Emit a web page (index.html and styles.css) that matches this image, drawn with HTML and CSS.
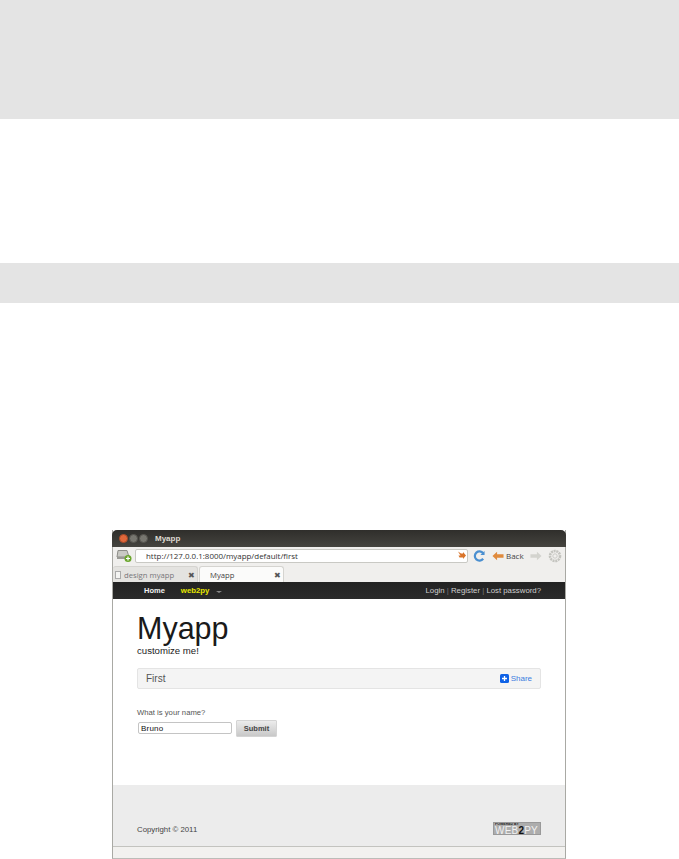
FILE: index.html
```html
<!DOCTYPE html>
<html lang="en">
<head>
<meta charset="UTF-8" />
<title>Myapp</title>
<link rel="stylesheet" href="styles.css">
</head>
<body>
    <div class="band band-top"></div>
    <div class="band band-mid"></div>

    <div class="window">
        <div class="titlebar">
            <div class="win-buttons">
                <span class="dot dot-close"></span>
                <span class="dot"></span>
                <span class="dot"></span>
            </div>
            <span class="win-title">Myapp</span>
        </div>

        <div class="toolbar">
            <svg class="icon-addr" width="16" height="13" viewBox="0 0 16 13">
                <path d="M2 1.5h9l2 6.500H1z" fill="#c9c9c4" stroke="#8d8d88" stroke-width="1"/>
                <rect x="1" y="8" width="11" height="2" fill="#9a9a95"/>
                <circle cx="12" cy="9.500" r="3.500" fill="#6aa62c"/>
                <path d="M12 7.500v4M10 9.500h4" stroke="#fff" stroke-width="1.200"/>
            </svg>
            <div class="addressbar">
                <span class="url">http://127.0.0.1:8000/myapp/default/first</span>
                <svg width="9" height="10" viewBox="0 0 9 10">
                    <path d="M1 0.500l3 2h2v-1.500l3 3.500-3 3.500v-1.500h-3.500l-1-2h2z" fill="#d9742a"/>
                </svg>
            </div>
            <svg class="icon-reload" width="12" height="12" viewBox="0 0 13 13">
                <path d="M11 3.500a5 5 0 1 0 0 6" fill="none" stroke="#4a8fd0" stroke-width="2.400"/>
                <path d="M8 5.500h4.500v-4.500z" fill="#4a8fd0"/>
            </svg>
            <svg class="icon-back" width="12" height="10" viewBox="0 0 13 10">
                <path d="M0.500 5l5-4.500v2.500h7v4h-7v2.500z" fill="#e08a3c"/>
            </svg>
            <span class="back-label">Back</span>
            <svg class="icon-fwd" width="12" height="10" viewBox="0 0 13 10">
                <path d="M12.500 5l-5-4.500v2.500h-7v4h7v2.500z" fill="#d3d3ce"/>
            </svg>
            <svg class="icon-gear" width="14" height="14" viewBox="0 0 14 14">
                <circle cx="7" cy="7" r="5" fill="none" stroke="#c4c4bf" stroke-width="2.600" stroke-dasharray="2 0.700"/>
                <circle cx="7" cy="7" r="2.200" fill="none" stroke="#cbcbc6" stroke-width="1"/>
            </svg>
        </div>

        <div class="tabs">
            <div class="tab tab-back">
                <span class="page-icon"></span>
                <span class="tab-label">design myapp</span>
                <span class="tab-close">✖</span>
            </div>
            <div class="tab tab-active">
                <span class="tab-label">Myapp</span>
                <span class="tab-close">✖</span>
            </div>
        </div>

        <div class="navbar">
            <div class="nav-left">
                <a class="nav-home">Home</a>
                <a class="nav-brand">web2py</a>
                <span class="nav-caret"></span>
            </div>
            <div class="nav-right">Login <i>|</i> Register <i>|</i> Lost password?</div>
        </div>

        <div class="content">
            <h1>Myapp</h1>
            <p class="tagline">customize me!</p>
            <div class="statusbar">
                <span>First</span>
                <a class="share">
                    <svg width="9" height="9" viewBox="0 0 9 9">
                        <rect width="9" height="9" rx="1.500" fill="#0f62e6"/>
                        <path d="M4.500 2v5M2 4.500h5" stroke="#fff" stroke-width="1.300"/>
                    </svg>
                    Share
                </a>
            </div>
            <label class="name-label">What is your name?</label>
            <div class="name-row">
                <input class="name-input" type="text" value="Bruno">
                <button class="submit">Submit</button>
            </div>
        </div>

        <div class="footer">
            <span class="copyright">Copyright © 2011</span>
            <div class="powered">
                <span class="powered-by">POWERED BY</span>
                <span class="powered-name">WEB<b>2</b>PY</span>
            </div>
        </div>
        <div class="window-status"></div>
    </div>
</body>
</html>
```

FILE: styles.css
```css
html, body {
    height: 859px;
    overflow: hidden;
}
body {
    margin: 0;
    background: #fff;
    font-family: "Liberation Sans", Arial, sans-serif;
    color: #222;
}
.band {
    background: #e4e4e4;
}
.band-top {
    height: 119px;
}
.band-mid {
    height: 40px;
    margin-top: 144px;
}

/* browser window */
.window {
    box-sizing: border-box;
    width: 454px;
    height: 329px;
    margin: 227px 0 0 112px;
    border-left: 1px solid #a9a9a4;
    border-right: 1px solid #a9a9a4;
    border-bottom: 1px solid #bcbcb8;
    display: flex;
    flex-direction: column;
}
.titlebar {
    height: 17px;
    margin: 0 -1px;
    background: linear-gradient(#2f2e2b, #45443f);
    border-radius: 5px 5px 0 0;
    display: flex;
    align-items: center;
    padding-left: 7px;
    flex: none;
}
.win-buttons {
    display: flex;
    gap: 1px;
}
.dot {
    width: 7px;
    height: 7px;
    border-radius: 50%;
    background: #77766f;
    border: 1px solid #55544e;
    box-sizing: content-box;
}
.dot-close {
    background: #e0673a;
    border-color: #a84a28;
}
.win-title {
    margin-left: 7px;
    font-size: 8px;
    font-weight: bold;
    color: #dfdbd2;
}
.toolbar {
    height: 19px;
    flex: none;
    box-sizing: border-box;
    padding: 0 0 2px 3px;
    background: #f0efed;
    display: flex;
    align-items: center;
}
.addressbar {
    box-sizing: border-box;
    width: 333px;
    height: 14px;
    margin-left: 3px;
    background: #fff;
    border: 1px solid #c9c9c4;
    border-radius: 2px;
    display: flex;
    align-items: center;
    justify-content: space-between;
    padding: 0 1px 0 10px;
}
.url {
    font-size: 7.950px;
    color: #333;
    font-family: "Open Sans", sans-serif;
}
.icon-reload {
    margin-left: 5px;
}
.icon-back {
    margin-left: 7px;
}
.back-label {
    margin-left: 2px;
    font-size: 8px;
    color: #444;
    font-family: "Open Sans", sans-serif;
}
.icon-fwd {
    margin-left: 6px;
}
.icon-gear {
    margin-left: 6px;
}
.tabs {
    height: 16px;
    flex: none;
    background: #f0efed;
    display: flex;
    align-items: flex-end;
    gap: 1px;
}
.tab {
    height: 16px;
    box-sizing: border-box;
    display: flex;
    align-items: center;
    border: 1px solid #d5d4d0;
    border-bottom: none;
    border-radius: 3px 3px 0 0;
    font-size: 7.700px;
    font-family: "Open Sans", sans-serif;
    color: #555;
}
.tab-back {
    width: 85px;
    background: #e4e3e0;
    border-left: none;
    color: #77767a;
    padding-left: 2px;
}
.tab-active {
    width: 85px;
    background: #fbfbfa;
    padding-left: 10px;
    color: #444;
}
.page-icon {
    width: 6px;
    height: 8px;
    background: #f4f4f2;
    border: 1px solid #aaa;
    box-sizing: border-box;
    margin-right: 3px;
}
.tab-close {
    margin-left: auto;
    margin-right: 2px;
    font-size: 8px;
    color: #555;
}
.navbar {
    height: 17px;
    flex: none;
    background: linear-gradient(#222, #2b2b2b);
    display: flex;
    align-items: center;
    justify-content: space-between;
    padding: 0 24px 0 31px;
    font-size: 7.800px;
}
.nav-left {
    display: flex;
    align-items: center;
}
.nav-home {
    color: #f2f2f2;
    font-weight: bold;
    font-size: 7.500px;
}
.nav-brand {
    margin-left: 16px;
    color: #e6e600;
    font-weight: bold;
}
.nav-caret {
    margin: 3px 0 0 7px;
    border: 2px solid transparent;
    border-top: 2px solid #888;
    border-left-width: 3px;
    border-right-width: 3px;
    border-bottom: none;
}
.nav-right {
    color: #cfcfcf;
}
.nav-right i {
    font-style: normal;
    color: #777;
}
.content {
    height: 186px;
    flex: none;
    box-sizing: border-box;
    background: #fff;
    padding: 13px 24px 0;
}
h1 {
    margin: 0;
    font-size: 30.500px;
    line-height: 32px;
    font-weight: normal;
    color: #1a1a1a;
}
.tagline {
    margin: 2px 0 0;
    font-size: 9.600px;
    line-height: 10px;
    color: #222;
}
.statusbar {
    box-sizing: border-box;
    height: 21px;
    margin-top: 12px;
    background: #f4f4f4;
    border: 1px solid #e4e4e4;
    border-radius: 2px;
    display: flex;
    align-items: center;
    justify-content: space-between;
    padding: 0 8px;
    font-size: 10px;
    color: #555;
}
.share {
    display: flex;
    align-items: center;
    gap: 2px;
    font-size: 8px;
    color: #3b7de0;
}
.name-label {
    display: block;
    margin-top: 19px;
    font-size: 7.700px;
    line-height: 10px;
    color: #555;
}
.name-row {
    display: flex;
    align-items: center;
    gap: 4px;
    margin-top: 2px;
}
.name-input {
    box-sizing: border-box;
    width: 94px;
    height: 12px;
    margin: 0 0 1px 1px;
    padding: 0 2px;
    border: 1px solid #c4c4c4;
    border-radius: 2px;
    font-family: "Liberation Sans", Arial, sans-serif;
    font-size: 8px;
    letter-spacing: 0.2px;
    color: #111;
}
.submit {
    box-sizing: border-box;
    width: 41px;
    height: 17px;
    padding: 0;
    border: 1px solid #d4d4d4;
    border-radius: 1px;
    background: linear-gradient(#ececec, #c8c8c8);
    font-family: "Liberation Sans", Arial, sans-serif;
    font-size: 7.500px;
    font-weight: bold;
    color: #444;
}
.footer {
    height: 62px;
    flex: none;
    box-sizing: border-box;
    background: #ececec;
    border-bottom: 1px solid #c3c3bf;
    display: flex;
    align-items: flex-end;
    justify-content: space-between;
    padding: 0 24px 11px;
}
.copyright {
    font-size: 7.800px;
    line-height: 10px;
    color: #444;
}
.powered {
    box-sizing: border-box;
    width: 48px;
    height: 13px;
    background: #adadad;
    border: 1px solid #999;
    display: flex;
    flex-direction: column;
    overflow: hidden;
    padding-left: 1px;
}
.powered-by {
    flex: none;
    font-size: 3.500px;
    line-height: 3px;
    font-weight: bold;
    color: #222;
}
.powered-name {
    flex: none;
    font-size: 10px;
    line-height: 9px;
    letter-spacing: 0.2px;
    color: #f2f2f2;
}
.powered-name b {
    color: #111;
}
.window-status {
    flex: 1;
    background: #f2f1ef;
}
```
